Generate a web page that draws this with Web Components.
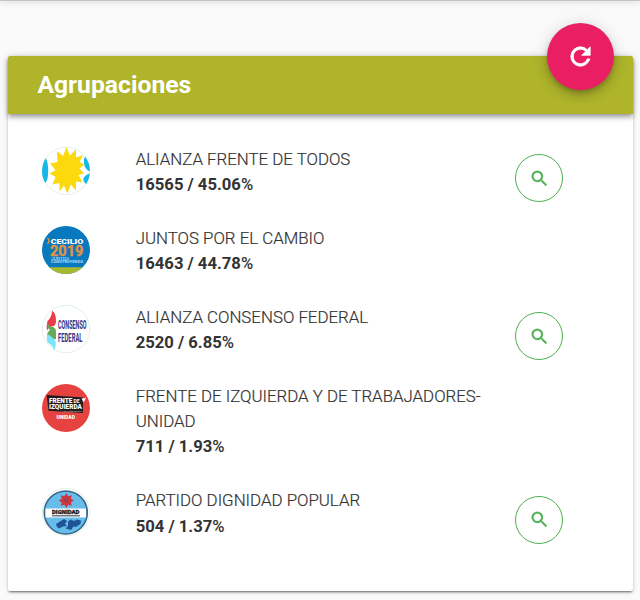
<!DOCTYPE html>
<html lang="es">
<head>
<meta charset="utf-8">
<title>Agrupaciones</title>
<style>
  html, body {
    margin: 0;
    height: 100%;
    overflow: hidden;
  }

  body {
    background: #fafafa;
    color: #333;
    font-family: Roboto, "Liberation Sans", sans-serif;
  }
</style>
</head>
<body>
<results-page>
  <results-card heading="Agrupaciones">
    <refresh-button slot="action"></refresh-button>
    <party-row name="ALIANZA FRENTE DE TODOS" votes="16565" percent="45.06" detail>
      <party-logo slot="logo" party="todos"></party-logo>
    </party-row>
    <party-row name="JUNTOS POR EL CAMBIO" votes="16463" percent="44.78">
      <party-logo slot="logo" party="cambio"></party-logo>
    </party-row>
    <party-row name="ALIANZA CONSENSO FEDERAL" votes="2520" percent="6.85" detail>
      <party-logo slot="logo" party="consenso"></party-logo>
    </party-row>
    <party-row name="FRENTE DE IZQUIERDA Y DE TRABAJADORES-UNIDAD" votes="711" percent="1.93">
      <party-logo slot="logo" party="izquierda"></party-logo>
    </party-row>
    <party-row name="PARTIDO DIGNIDAD POPULAR" votes="504" percent="1.37" detail>
      <party-logo slot="logo" party="dignidad"></party-logo>
    </party-row>
  </results-card>
</results-page>

<script>
const LOGOS = {
  todos: `
    <circle cx="24" cy="24" r="23.7" fill="#fff" stroke="#d3ecd5" stroke-width=".7"/>
    <path d="M3.8 11.2A24 24 0 0 0 3.2 36Q6.200 33 6.200 24T3.8 11.2z" fill="#16b8ea"/>
    <path d="M43 9.500A24 24 0 0 1 48 24.500Q41 22 42 12z" fill="#16b8ea"/>
    <path d="M47.9 26.500A24 24 0 0 1 44.200 37Q41.500 35.500 41.300 32.500 42 28 47.9 26.500z" fill="#16b8ea"/>
    <path d="M24.500 0L27.800 8.500 34 2.500 34 10.500 41 8 37.500 15 42.500 17.500 37.500 21.500 42 26.500 36.500 28 40.500 35.500 34 34.500 34 43.500 28.800 37.500 25.500 46.500 22 38.500 17.500 44.500 17.500 36 10.500 37.500 13.500 30 7.500 26.500 13.500 23 8 16.500 15.500 15 15 4 21 9z" fill="#fbd90d"/>`,
  cambio: `
    <circle cx="24" cy="24" r="24" fill="#0878bf"/>
    <path d="M7.200 41.200H40.800A24 24 0 0 1 7.200 41.200z" fill="#a8b92d"/>
    <path d="M5.500 12Q8.500 14.500 5.500 18" fill="none" stroke="#e2933f" stroke-width="1.500"/>
    <text x="8.700" y="17.800" font-size="8" font-weight="900" fill="#fff" textLength="32.500" lengthAdjust="spacingAndGlyphs">CECILIO</text>
    <text x="8" y="29.800" font-size="15.500" font-weight="700" fill="#e2933f" stroke="#e2933f" stroke-width=".4" textLength="33.500" lengthAdjust="spacingAndGlyphs">2019</text>
    <text x="9" y="33.500" font-size="3.600" font-weight="500" fill="#b5d9ef" textLength="18" lengthAdjust="spacingAndGlyphs">JUNTOS</text>
    <text x="9" y="37.300" font-size="3.800" font-weight="700" fill="#b5d9ef" textLength="32" lengthAdjust="spacingAndGlyphs">CONSTRUYENDO</text>`,
  consenso: `
    <circle cx="24" cy="24" r="23.7" fill="#fff" stroke="#d3ecd5" stroke-width=".7"/>
    <path d="M10 5.500Q14.500 9 14 17Q13.500 21 10 21.500Q6 22 5 26Q4.200 20 5.500 16Q10 12 10 5.500z" fill="#ea3c4b"/>
    <path d="M5.500 17.500Q7 22 11 22Q14.500 23 14 29V34Q11 35 9.500 32Q7 30 5 31Q5 27 8 25Q4.500 23 5.500 17.500z" fill="#67a958"/>
    <path d="M5 30Q8 29 9.500 32.500Q13.500 34 13.800 38Q14.200 42.500 12 45.500Q11 40 5.500 37.500Q4.500 34 5 30z" fill="#78e5fa"/>
    <text x="16" y="24.300" font-size="13.500" font-weight="700" fill="#393481" textLength="28.500" lengthAdjust="spacingAndGlyphs">CONSENSO</text>
    <text x="16" y="36.700" font-size="13.500" font-weight="700" fill="#393481" textLength="24.500" lengthAdjust="spacingAndGlyphs">FEDERAL</text>`,
  izquierda: `
    <circle cx="24" cy="24" r="24" fill="#e64340"/>
    <path d="M4.700 11L41 13.500V29L6.500 26.800z" fill="#211c20"/>
    <text x="7" y="19.300" font-size="7.200" font-weight="900" fill="#fff" textLength="23.500" lengthAdjust="spacingAndGlyphs">FRENTE</text>
    <text x="31.500" y="18.800" font-size="4.500" font-weight="700" fill="#fff" textLength="6" lengthAdjust="spacingAndGlyphs">DE</text>
    <path d="M39.500 14.500L41.500 18.500 44 14z" fill="#fff"/>
    <text x="7" y="25.200" font-size="7.200" font-weight="900" fill="#fff" textLength="33" lengthAdjust="spacingAndGlyphs">IZQUIERDA</text>
    <text x="20" y="28" font-size="2.500" fill="#bbb" textLength="20" lengthAdjust="spacingAndGlyphs">Y DE TRABAJADORES</text>
    <text x="14.500" y="34.600" font-size="4.500" font-weight="900" fill="#fff" textLength="18.500" lengthAdjust="spacingAndGlyphs">UNIDAD</text>`,
  dignidad: `
    <circle cx="24" cy="24" r="23.7" fill="#fff" stroke="#d3ecd5" stroke-width=".7"/>
    <circle cx="23.800" cy="24.500" r="21.500" fill="#67bdea" stroke="#39658c" stroke-width="1.600"/>
    <path d="M3.500 20.500H44V29.500H3.500z" fill="#fff"/>
    <path d="M24.300 5L26.200 8.300 29.800 7.300 28.900 10.700 31.800 12.500 28.900 14.500 29.800 17.800 26.200 16.800 24.300 20 22.400 16.800 18.800 17.800 19.700 14.500 16.800 12.500 19.700 10.700 18.800 7.300 22.400 8.300z" fill="#d2343d"/>
    <circle cx="24.300" cy="12.500" r="2.300" fill="#9d3b4f"/>
    <text x="10" y="26.200" font-size="6" font-weight="900" fill="#111a25" stroke="#111a25" stroke-width=".3" textLength="27.500" lengthAdjust="spacingAndGlyphs">DIGNIDAD</text>
    <path d="M10 27.800H38" stroke="#59626c" stroke-width="1.300"/>
    <path d="M14 36L18 33.500 22 31 25 33 23 36 25 38 21 38.500 17 40.500 15 39z M26 33.500L29 31.500 32 33 35 31.500 39 32.500 38.500 36 34 39 31.500 38.500 29 42 23.500 40.500 26 38z" fill="#1f5596"/>`
};

class PartyLogo extends HTMLElement {
  constructor() {
    super();
    this.attachShadow({ mode: "open" });
  }

  connectedCallback() {
    this.shadowRoot.innerHTML = `
      <style>
        :host {
          display: block;
          width: 48px;
          height: 48px;
        }

        svg {
          display: block;
          overflow: visible;
        }
      </style>
      <svg width="48" height="48" viewBox="0 0 48 48">${LOGOS[this.getAttribute("party")]}</svg>
    `;
  }
}

class RefreshButton extends HTMLElement {
  constructor() {
    super();
    this.attachShadow({ mode: "open" });
    this.shadowRoot.innerHTML = `
      <style>
        :host {
          display: block;
        }

        button {
          display: grid;
          place-items: center;
          width: 67px;
          height: 67px;
          padding: 0;
          border: none;
          border-radius: 50%;
          background: #e91e63;
          box-shadow: 0 3px 5px -1px rgba(0, 0, 0, .2), 0 6px 10px rgba(0, 0, 0, .14), 0 1px 18px rgba(0, 0, 0, .12);
        }
      </style>
      <button aria-label="Actualizar">
        <svg width="29" height="29" viewBox="0 0 24 24" fill="#fff" stroke="#fff" stroke-width=".7"><path d="M17.650 6.350A7.958 7.958 0 0 0 12 4a8 8 0 1 0 7.730 10h-2.080A6 6 0 1 1 12 6c1.660 0 3.140.690 4.220 1.780L13 11h7V4z"/></svg>
      </button>
    `;
  }
}

class DetailButton extends HTMLElement {
  constructor() {
    super();
    this.attachShadow({ mode: "open" });
    this.shadowRoot.innerHTML = `
      <style>
        :host {
          display: block;
        }

        button {
          display: grid;
          place-items: center;
          box-sizing: border-box;
          width: 48px;
          height: 48px;
          padding: 0 0 0 1px;
          border: 1px solid #4caf50;
          border-radius: 50%;
          background: transparent;
        }
      </style>
      <button aria-label="Ver detalle">
        <svg width="21" height="21" viewBox="0 0 24 24" fill="#4caf50" stroke="#4caf50" stroke-width=".3"><path d="M15.500 14h-.790l-.280-.270A6.471 6.471 0 0 0 16 9.500 6.500 6.500 0 1 0 9.500 16c1.610 0 3.090-.590 4.230-1.570l.270.280v.790l5 4.990L20.490 19zm-6 0C7.010 14 5 11.990 5 9.500S7.010 5 9.500 5 14 7.010 14 9.500 11.990 14 9.500 14z"/></svg>
      </button>
    `;
  }
}

class PartyRow extends HTMLElement {
  constructor() {
    super();
    this.attachShadow({ mode: "open" });
  }

  connectedCallback() {
    const name = this.getAttribute("name");
    const votes = this.getAttribute("votes");
    const percent = this.getAttribute("percent");

    this.shadowRoot.innerHTML = `
      <style>
        :host {
          display: grid;
          grid-template-columns: 94px 360px 1fr;
          align-items: start;
          padding-bottom: 28.9px;
          font-size: 16.85px;
          line-height: 25.1px;
        }

        .name {
          font-weight: 300;
          -webkit-text-stroke: .2px;
        }

        .result {
          font-size: 16.65px;
          font-weight: 700;
        }

        .sign {
          font-weight: 500;
        }

        .action {
          height: 50px;
          padding: 7.2px 0 0 19px;
          box-sizing: border-box;
        }
      </style>
      <slot name="logo"></slot>
      <div>
        <div class="name">${name}</div>
        <div class="result">${votes} / ${percent}<span class="sign">%</span></div>
      </div>
      <div class="action">${this.hasAttribute("detail") ? "<detail-button></detail-button>" : ""}</div>
    `;
  }
}

class ResultsCard extends HTMLElement {
  constructor() {
    super();
    this.attachShadow({ mode: "open" });
  }

  connectedCallback() {
    this.shadowRoot.innerHTML = `
      <style>
        :host {
          display: block;
          position: relative;
          box-sizing: border-box;
          height: 535px;
          border-radius: 2px;
          background: #fff;
          box-shadow: 0 3px 1px -2px rgba(0, 0, 0, .25), 0 2px 2px rgba(0, 0, 0, .18), 0 1px 5px rgba(0, 0, 0, .14);
        }

        header {
          display: flex;
          align-items: center;
          height: 58px;
          padding: 0 0 1px 29px;
          box-sizing: border-box;
          border-radius: 2px 2px 0 0;
          background: #afb42b;
          box-shadow: 0 2px 4px -1px rgba(0, 0, 0, .25), 0 4px 5px rgba(0, 0, 0, .18), 0 1px 10px rgba(0, 0, 0, .14);
        }

        h2 {
          margin: 0;
          color: #fff;
          font-size: 24.7px;
          font-weight: 700;
        }

        .list {
          padding: 33px 0 0 33.3px;
        }

        /* the round button sits over the card's top edge */
        .action {
          position: absolute;
          top: -33px;
          right: 19.5px;
        }
      </style>
      <header><h2>${this.getAttribute("heading")}</h2></header>
      <div class="list"><slot></slot></div>
      <div class="action"><slot name="action"></slot></div>
    `;
  }
}

class ResultsPage extends HTMLElement {
  constructor() {
    super();
    this.attachShadow({ mode: "open" });
    this.shadowRoot.innerHTML = `
      <style>
        :host {
          display: block;
        }

        .toolbar-edge {
          height: 1px;
          background: #c4c4c4;
          box-shadow: 0 1px 4px rgba(0, 0, 0, .3), 0 3px 14px rgba(0, 0, 0, .14);
        }

        main {
          padding: 55px 7px 0 8.4px;
        }
      </style>
      <div class="toolbar-edge"></div>
      <main><slot></slot></main>
    `;
  }
}

customElements.define("party-logo", PartyLogo);
customElements.define("refresh-button", RefreshButton);
customElements.define("detail-button", DetailButton);
customElements.define("party-row", PartyRow);
customElements.define("results-card", ResultsCard);
customElements.define("results-page", ResultsPage);
</script>
</body>
</html>
